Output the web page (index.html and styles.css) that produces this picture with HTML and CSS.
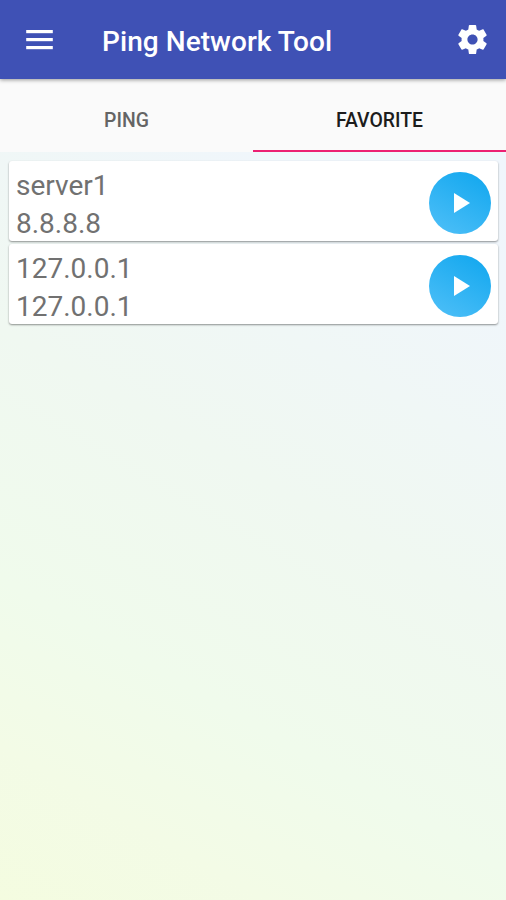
FILE: index.html
```html
<!DOCTYPE html>
<html lang="en">
<head>
    <meta charset="UTF-8" />
    <meta name="viewport" content="width=device-width, initial-scale=1.0"/>
    <title>Ping Network Tool</title>
    <link rel="stylesheet" href="styles.css">
</head>
<body>
    <header class="toolbar">
        <button class="icon-button" aria-label="Menu">
            <svg width="27" height="20" viewBox="0 0 27 20" fill="#fff">
                <rect x="0.2" y="0" width="26.6" height="3.2"/>
                <rect x="0.2" y="8" width="26.6" height="3.2"/>
                <rect x="0.2" y="16" width="26.6" height="3.2"/>
            </svg>
        </button>
        <h1 class="title">Ping Network Tool</h1>
        <button class="icon-button" aria-label="Settings">
            <svg width="35" height="35" viewBox="0 0 24 24" fill="#fff">
                <path d="M19.43 12.98c.04-.32.07-.64.07-.98s-.03-.66-.07-.98l2.11-1.65c.19-.15.24-.42.12-.64l-2-3.46c-.12-.22-.39-.3-.61-.22l-2.49 1c-.52-.4-1.08-.73-1.69-.98l-.38-2.65C14.46 2.18 14.25 2 14 2h-4c-.25 0-.46.18-.49.42l-.38 2.65c-.61.25-1.17.59-1.69.98l-2.49-1c-.23-.09-.49 0-.61.22l-2 3.46c-.13.22-.07.49.12.64l2.11 1.65c-.04.32-.07.65-.07.98s.03.66.07.98l-2.11 1.65c-.19.15-.24.42-.12.64l2 3.46c.12.22.39.3.61.22l2.49-1c.52.4 1.08.73 1.69.98l.38 2.65c.03.24.24.42.49.42h4c.25 0 .46-.18.49-.42l.38-2.65c.61-.25 1.17-.59 1.69-.98l2.49 1c.23.09.49 0 .61-.22l2-3.46c.12-.22.07-.49-.12-.64l-2.11-1.65zM12 15.5c-1.93 0-3.5-1.57-3.5-3.5s1.57-3.5 3.5-3.5 3.5 1.57 3.5 3.5-1.57 3.5-3.5 3.5z"/>
            </svg>
        </button>
    </header>
    <nav class="tabs">
        <a class="tab"><span>PING</span></a>
        <a class="tab active"><span>FAVORITE</span></a>
    </nav>
    <main class="server-list">
        <div class="card">
            <div class="info">
                <p>server1</p>
                <p>8.8.8.8</p>
            </div>
            <button class="play" aria-label="Ping server1">
                <svg width="16" height="20" viewBox="0 0 16 20"><path d="M0 0v20l16-10z" fill="#fff"/></svg>
            </button>
        </div>
        <div class="card">
            <div class="info">
                <p>127.0.0.1</p>
                <p>127.0.0.1</p>
            </div>
            <button class="play" aria-label="Ping 127.0.0.1">
                <svg width="16" height="20" viewBox="0 0 16 20"><path d="M0 0v20l16-10z" fill="#fff"/></svg>
            </button>
        </div>
    </main>
</body>
</html>
```
FILE: styles.css
```css
* {
    box-sizing: border-box;
}

body {
    font-family: Roboto, "Liberation Sans", sans-serif;
    margin: 0;
    min-height: 100vh;
    background: linear-gradient(30deg, #f4fce0 0%, #f3fbe6 13%, #f0fbec 27%, #f0f8f1 48%, #f0f6fb 75%, #f0f6fd 100%);
}

button {
    border: none;
    background: none;
    padding: 0;
    cursor: pointer;
}

svg {
    display: block;
}

.toolbar {
    position: relative;
    display: flex;
    align-items: center;
    height: 79px;
    padding: 0 16px 0 26px;
    background: #3f51b5;
    box-shadow: 0 1px 4px rgba(0, 0, 0, 0.4);
}

.title {
    flex: 1;
    margin: 4px 0 0 49px;
    color: #fff;
    font-size: 28px;
    font-weight: 500;
    line-height: 36px;
    letter-spacing: 0.06px;
}

.tabs {
    display: flex;
    height: 73px;
    background: #fafafa;
}

.tab {
    flex: 1;
    display: flex;
    align-items: center;
    justify-content: center;
    padding-top: 11px;
    border-bottom: 2px solid transparent;
    color: #646464;
    font-size: 19.4px;
    font-weight: 500;
}

.tab.active {
    color: #1c1c1c;
    border-bottom-color: #ec2073;
}

.server-list {
    display: flex;
    flex-direction: column;
    gap: 3px;
    padding: 9px 8px 0 9px;
}

.card {
    display: flex;
    align-items: center;
    justify-content: space-between;
    height: 80px;
    padding: 4px 7px 0 7px;
    border-radius: 3px;
    background: #fff;
    box-shadow: 0 1px 2px rgba(0, 0, 0, 0.42);
}

.info {
    padding-top: 3px;
}

.info p {
    margin: 0;
    color: #717171;
    font-size: 28px;
    line-height: 38px;
}

.play {
    display: flex;
    align-items: center;
    justify-content: center;
    width: 62px;
    height: 62px;
    padding-left: 3px;
    border-radius: 50%;
    background: linear-gradient(210deg, #0fa6ee, #50c0f8);
}
```
